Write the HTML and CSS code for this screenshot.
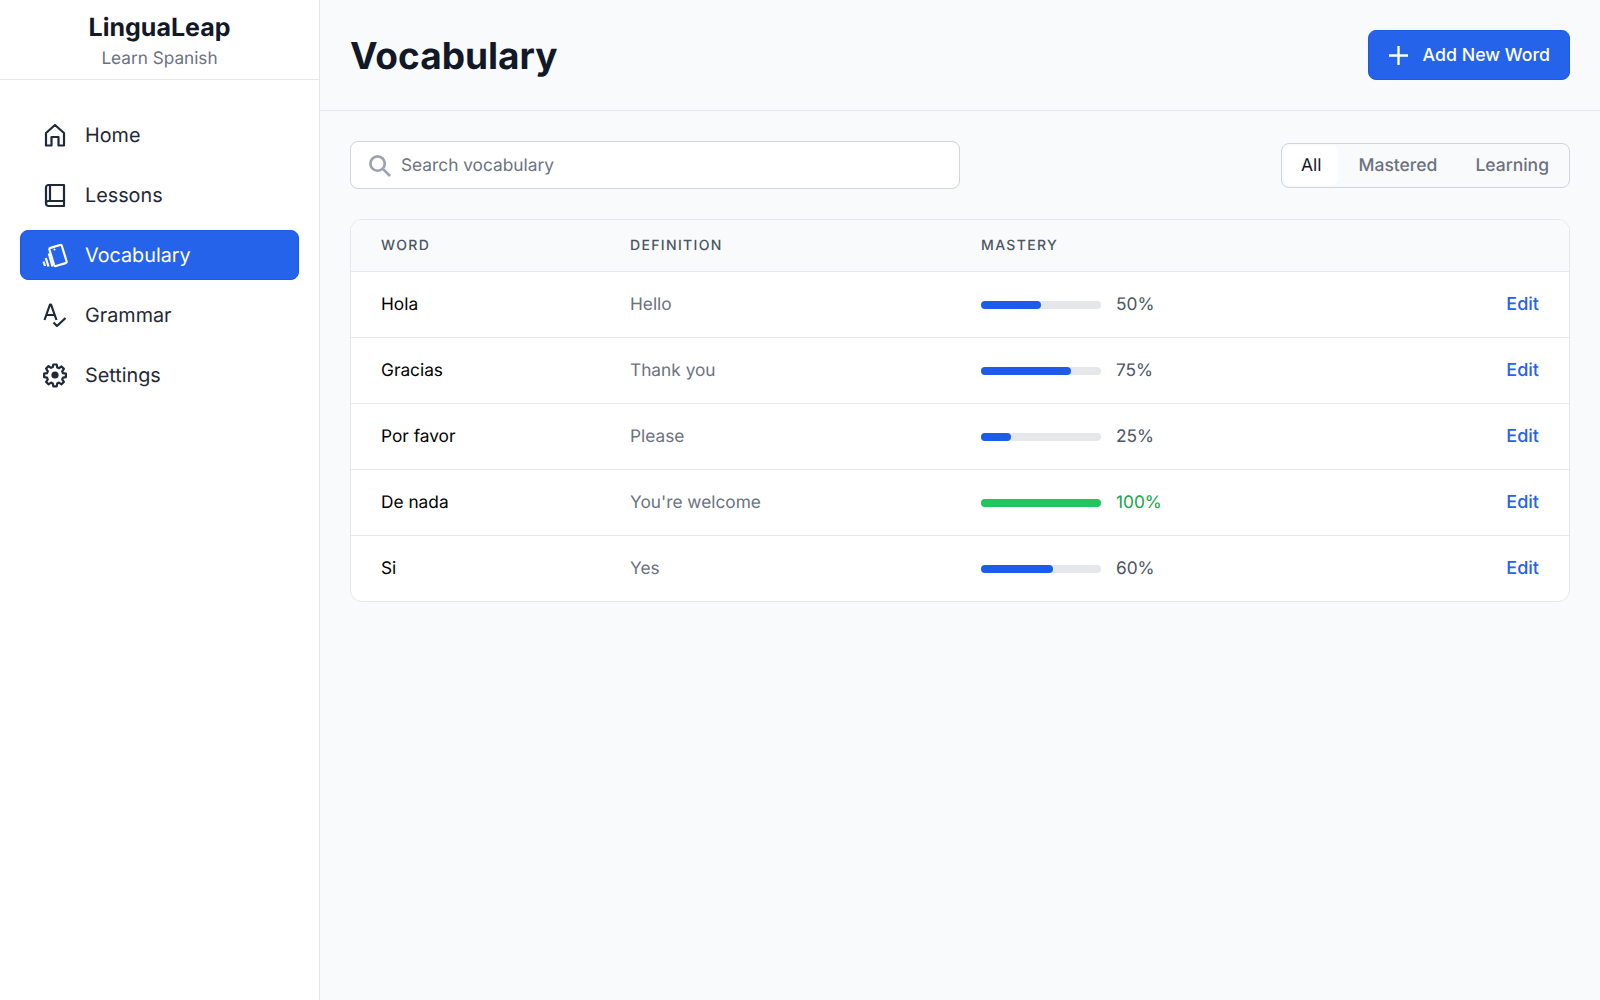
FILE: index.html
```html
<!DOCTYPE html>
<html>
<head>
    <meta charset="utf-8">
    <meta content="width=device-width, initial-scale=1" name="viewport">
    <title>Vocabulary</title>
    <link rel="stylesheet" href="styles.css">
</head>
<body>
<div class="app">
    <aside class="sidebar">
        <div class="brand">
            <h2>LinguaLeap</h2>
            <p>Learn Spanish</p>
        </div>
        <nav class="nav">
            <a class="nav-item">
                <svg viewBox="0 0 24 24" class="nav-icon"><path d="M3 22.500V10L12 2l9 8v12.500h-5.500V14h-7v8.500z"/></svg>
                <span>Home</span>
            </a>
            <a class="nav-item">
                <svg viewBox="0 0 24 24" class="nav-icon"><path d="M3 20V4.500A2.500 2.500 0 0 1 5.500 2H21v21H5.500A2.500 2.500 0 0 1 3 20.500 2.500 2.500 0 0 1 5.500 18H21M7 2v16"/></svg>
                <span>Lessons</span>
            </a>
            <a class="nav-item active">
                <svg viewBox="0 0 24 24" class="nav-icon"><rect x="8.500" y="3" width="13" height="19" rx="1.500" transform="rotate(-17 15 12.500)"/><circle class="solid" cx="11.500" cy="6.500" r="1"/><path d="M5.800 10.500 9.500 23.500M2.800 15l2.700 8.500M.5 18.500 2 23"/></svg>
                <span>Vocabulary</span>
            </a>
            <a class="nav-item">
                <svg viewBox="0 0 24 24" class="nav-icon"><path d="M1.500 17 7 1.500h1L13.500 17M3.500 12h8M10.500 19.500 14 23l8.500-8"/></svg>
                <span>Grammar</span>
            </a>
            <a class="nav-item">
                <svg viewBox="0 0 24 24" class="nav-icon"><path d="M10.300 1.500h3.400l.5 2.900 1.800.8 2.500-1.700 2.400 2.400-1.700 2.500.8 1.800 2.900.5v3.400l-2.900.5-.8 1.800 1.700 2.500-2.400 2.400-2.500-1.700-1.800.8-.5 2.900h-3.400l-.5-2.900-1.800-.8-2.500 1.700-2.400-2.400 1.700-2.500-.8-1.800-2.900-.5v-3.400l2.900-.5.800-1.800L3.100 5.500l2.400-2.400L8 4.800l1.800-.8z"/><circle class="solid" cx="12" cy="12" r="3.600"/></svg>
                <span>Settings</span>
            </a>
        </nav>
    </aside>

    <main class="content">
        <header class="topbar">
            <h1>Vocabulary</h1>
            <button class="add-btn">
                <svg viewBox="0 0 24 24"><path d="M12 0v24M0 12h24"/></svg>
                <span>Add New Word</span>
            </button>
        </header>

        <section class="page">
            <div class="tools">
                <div class="search">
                    <svg viewBox="0 0 24 24"><circle cx="10" cy="10" r="7.500"/><path d="M15.500 15.500 23 23"/></svg>
                    <span>Search vocabulary</span>
                </div>
                <div class="filters">
                    <span class="filter current">All</span>
                    <span class="filter">Mastered</span>
                    <span class="filter">Learning</span>
                </div>
            </div>

            <div class="table-wrap">
                <table class="words">
                    <thead>
                        <tr>
                            <th class="col-word">Word</th>
                            <th class="col-def">Definition</th>
                            <th>Mastery</th>
                            <th class="col-edit"></th>
                        </tr>
                    </thead>
                    <tbody>
                        <tr>
                            <td class="word">Hola</td>
                            <td class="def">Hello</td>
                            <td><div class="mastery"><div class="bar"><div class="fill" style="width: 50%"></div></div><span>50%</span></div></td>
                            <td class="edit">Edit</td>
                        </tr>
                        <tr>
                            <td class="word">Gracias</td>
                            <td class="def">Thank you</td>
                            <td><div class="mastery"><div class="bar"><div class="fill" style="width: 75%"></div></div><span>75%</span></div></td>
                            <td class="edit">Edit</td>
                        </tr>
                        <tr>
                            <td class="word">Por favor</td>
                            <td class="def">Please</td>
                            <td><div class="mastery"><div class="bar"><div class="fill" style="width: 25%"></div></div><span>25%</span></div></td>
                            <td class="edit">Edit</td>
                        </tr>
                        <tr>
                            <td class="word">De nada</td>
                            <td class="def">You're welcome</td>
                            <td><div class="mastery done"><div class="bar"><div class="fill" style="width: 100%"></div></div><span>100%</span></div></td>
                            <td class="edit">Edit</td>
                        </tr>
                        <tr>
                            <td class="word">Si</td>
                            <td class="def">Yes</td>
                            <td><div class="mastery"><div class="bar"><div class="fill" style="width: 60%"></div></div><span>60%</span></div></td>
                            <td class="edit">Edit</td>
                        </tr>
                    </tbody>
                </table>
            </div>
        </section>
    </main>
</div>
</body>
</html>
```

FILE: styles.css
```css
* {
    box-sizing: border-box;
}

body {
    margin: 0;
    font-family: Inter, "Liberation Sans", sans-serif;
    color: #111827;
    background-color: #f9fafb;
    text-rendering: geometricPrecision;
}

.app {
    display: flex;
    min-height: 1000px;
}

.sidebar {
    width: 320px;
    flex-shrink: 0;
    background-color: #fff;
    border-right: 1px solid #e5e7eb;
}

.brand {
    height: 80px;
    padding-top: 12px;
    text-align: center;
    border-bottom: 1px solid #e5e7eb;
}

.brand h2 {
    margin: 0;
    font-size: 25px;
    line-height: 32px;
    font-weight: 700;
}

.brand p {
    margin: 3px 0 0;
    font-size: 17.200px;
    line-height: 24px;
    color: #6b7280;
}

.nav {
    display: flex;
    flex-direction: column;
    gap: 10px;
    padding: 30px 20px;
}

.nav-item {
    display: flex;
    align-items: center;
    gap: 18px;
    height: 50px;
    padding: 0 23px;
    border-radius: 8px;
    font-size: 19.800px;
    color: #1f2937;
}

.nav-item.active {
    background-color: #2563eb;
    border: 1px solid #1d5ae8;
    padding: 0 22px;
    color: #fff;
}

.nav-icon {
    width: 24px;
    height: 24px;
    flex-shrink: 0;
    fill: none;
    stroke: currentColor;
    stroke-width: 2.200;
    stroke-linejoin: round;
    overflow: visible;
}

.nav-icon .solid {
    fill: currentColor;
    stroke: none;
}

.content {
    flex: 1;
    min-width: 0;
}

.topbar {
    display: flex;
    align-items: center;
    justify-content: space-between;
    height: 111px;
    padding: 0 30px;
    border-bottom: 1px solid #e5e7eb;
}

.topbar h1 {
    margin: 0;
    padding-top: 1px;
    font-size: 37px;
    line-height: 40px;
    font-weight: 700;
}

.add-btn {
    display: flex;
    align-items: center;
    gap: 15px;
    height: 50px;
    padding: 0 19px 0 20px;
    border: 1px solid #1d5ae8;
    border-radius: 8px;
    background-color: #2563eb;
    color: #fff;
    font-family: inherit;
    font-size: 17.800px;
    font-weight: 500;
}

.add-btn span {
    padding-bottom: 2px;
}

.add-btn svg {
    width: 19px;
    height: 19px;
    fill: none;
    stroke: currentColor;
    stroke-width: 3;
}

.page {
    padding: 30px;
}

.tools {
    display: flex;
    align-items: center;
    justify-content: space-between;
    margin-bottom: 30px;
}

.search {
    display: flex;
    align-items: center;
    gap: 10px;
    width: 610px;
    height: 48px;
    padding: 0 17px;
    background-color: #fff;
    border: 1px solid #d1d5db;
    border-radius: 8px;
    font-size: 17.300px;
    color: #6b7280;
}

.search svg {
    width: 23px;
    height: 23px;
    fill: none;
    stroke: #9ca3af;
    stroke-width: 2.800;
}

.filters {
    display: flex;
    height: 45px;
    padding: 2px;
    border: 1px solid #d1d5db;
    border-radius: 8px;
}

.filter {
    display: flex;
    align-items: center;
    padding: 0 18px 0 20px;
    font-size: 17.500px;
    font-weight: 500;
    color: #6b7280;
}

.filter.current {
    background-color: #fff;
    border-radius: 6px;
    padding: 0 17px;
    font-weight: 400;
    color: #111827;
}

.table-wrap {
    background-color: #fff;
    border: 1px solid #e5e7eb;
    border-radius: 12px;
    overflow: hidden;
}

.words {
    width: 100%;
    border-collapse: collapse;
    table-layout: fixed;
}

.words th {
    height: 51px;
    padding: 0 30px;
    text-align: left;
    background-color: #f9fafb;
    border-bottom: 1px solid #e5e7eb;
    font-size: 14px;
    font-weight: 500;
    letter-spacing: 1.350px;
    text-transform: uppercase;
    color: #4b5563;
}

.col-word {
    width: 249px;
}

.col-def {
    width: 351px;
}

.col-edit {
    width: 140px;
}

.words td {
    height: 66px;
    padding: 1px 30px 0;
    border-bottom: 1px solid #e5e7eb;
    font-size: 17.300px;
}

.words tr:last-child td {
    border-bottom: 0;
}

.words .word {
    font-weight: 400;
    color: #000;
}

.words .def {
    color: #6b7280;
}

.mastery {
    display: flex;
    align-items: center;
    gap: 15px;
    color: #4b5563;
}

.bar {
    width: 120px;
    height: 8px;
    border-radius: 4px;
    background-color: #e5e7eb;
}

.fill {
    height: 100%;
    border-radius: 4px;
    background-color: #1d5ceb;
}

.done {
    color: #16a34a;
}

.done .fill {
    background-color: #22c55e;
}

.words .edit {
    text-align: right;
    font-size: 18px;
    font-weight: 500;
    color: #2563eb;
}
```
